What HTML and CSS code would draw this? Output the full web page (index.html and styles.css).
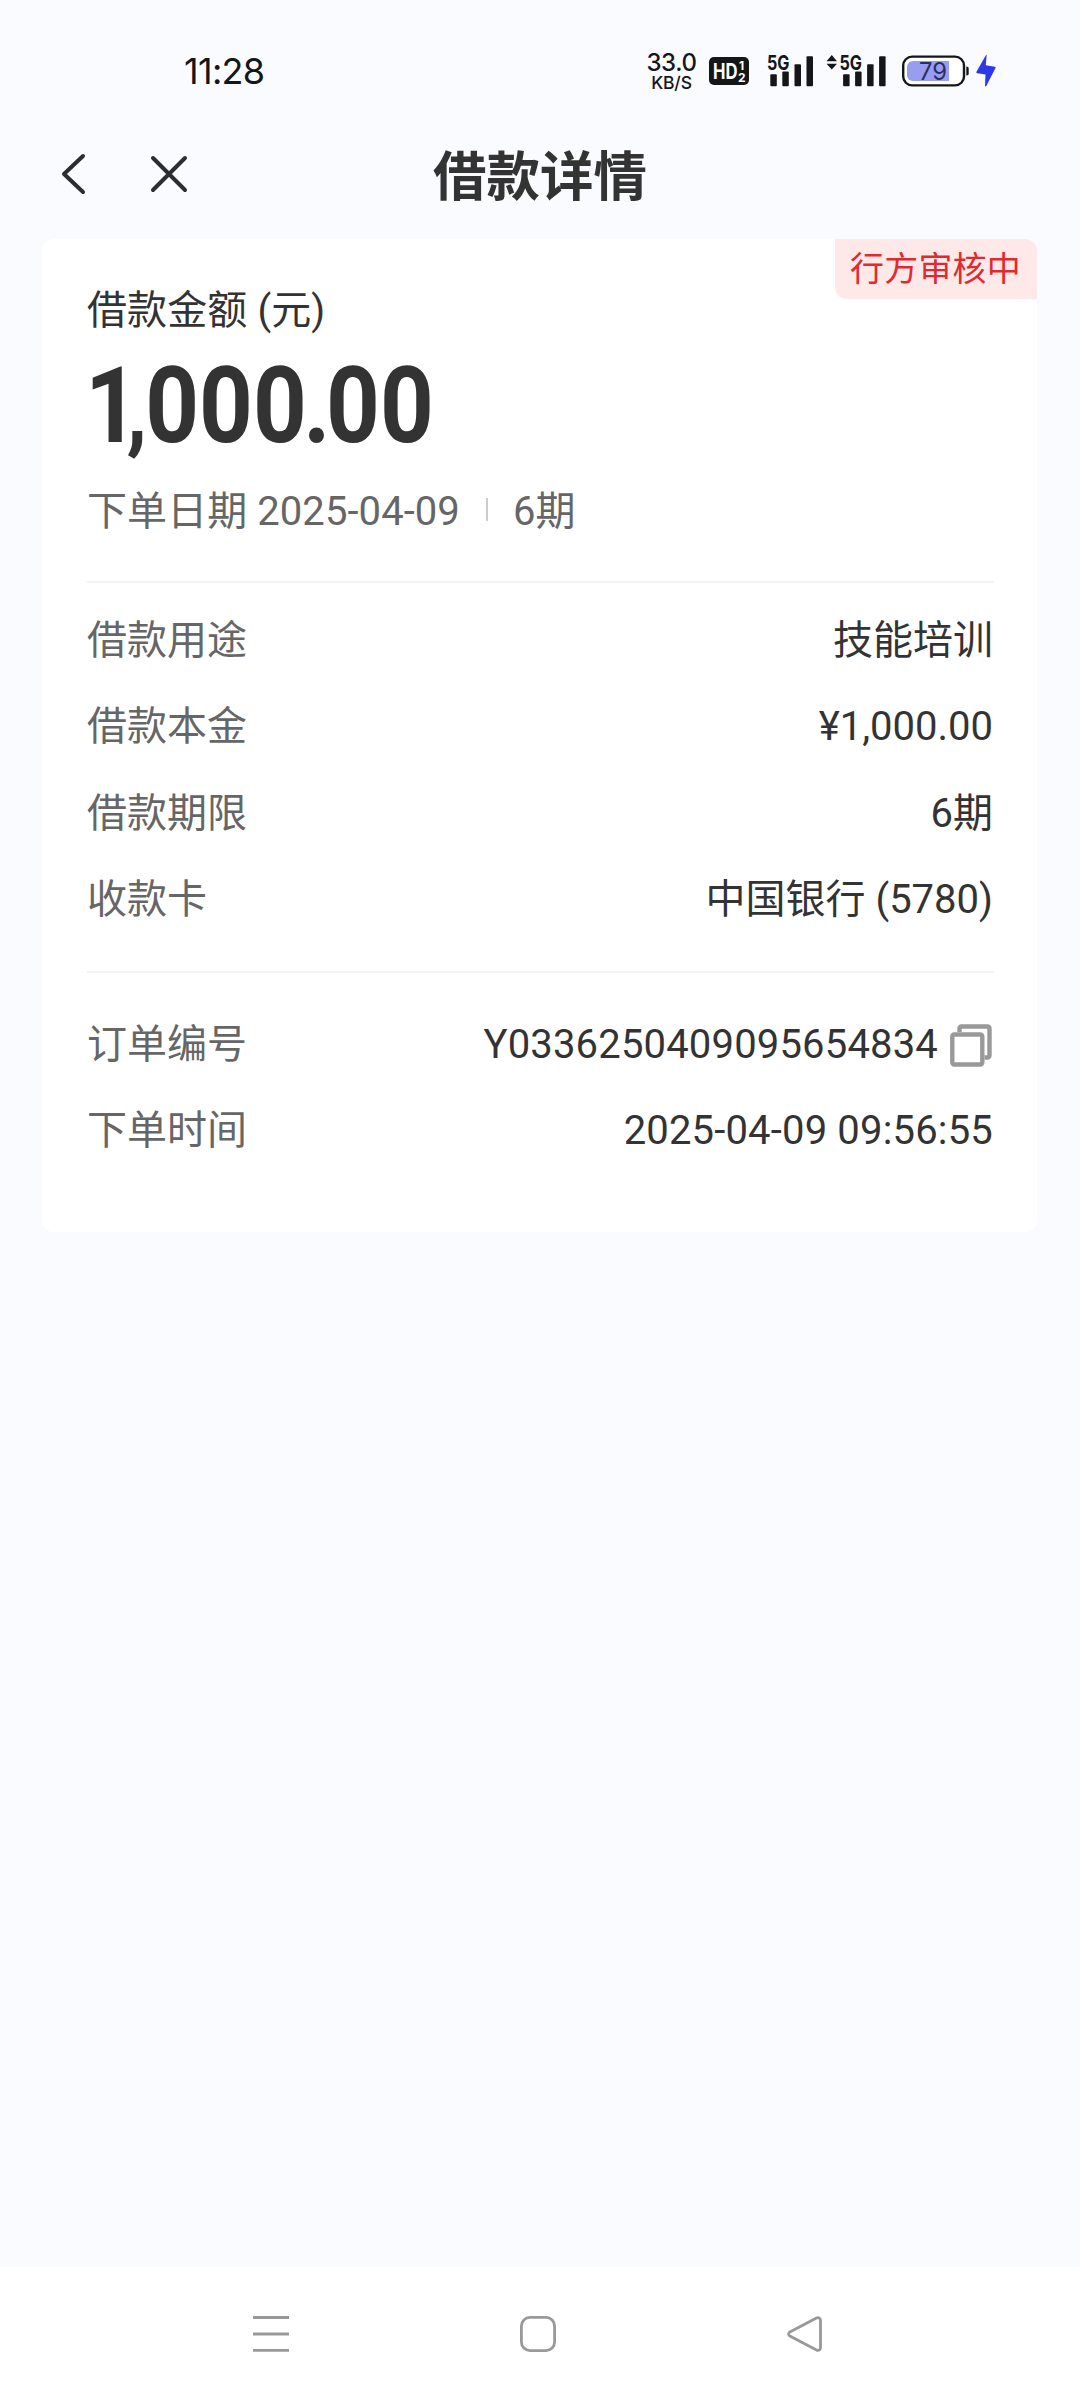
FILE: index.html
```html
<!DOCTYPE html>
<html lang="zh-CN">
<head>
<meta charset="utf-8">
<title>借款详情</title>
<link rel="stylesheet" href="styles.css">
</head>
<body>
<div class="screen">
  <div class="status">
    <span class="clock">11:28</span>
    <div class="status-icons">
      <div class="speed"><span class="speed-value">33.0</span><span class="speed-unit">KB/S</span></div>
      <svg class="hd" width="40" height="28" viewBox="0 0 40 28">
        <rect width="40" height="28" rx="5" fill="#151617"/>
        <g fill="#fff" font-family="Inter, sans-serif" font-weight="700">
          <text x="4" y="22" font-size="21" textLength="24.5" lengthAdjust="spacingAndGlyphs">HD</text>
          <text x="30" y="13" font-size="12">1</text>
          <text x="29" y="25" font-size="12">2</text>
        </g>
      </svg>
      <svg class="signal" width="47" height="32" viewBox="0 0 47 32" fill="#151617">
        <text x="0" y="14.8" font-family="Inter, sans-serif" font-weight="700" font-size="20.5" textLength="22.5" lengthAdjust="spacingAndGlyphs">5G</text>
        <rect x="3.3" y="19.3" width="6.5" height="12" rx="1"/><rect x="15.3" y="16.5" width="6.5" height="14.8" rx="1"/>
        <rect x="27.5" y="9.3" width="6.5" height="22" rx="1"/><rect x="39.5" y="1.3" width="6.5" height="30" rx="1"/>
      </svg>
      <svg class="signal-two" width="60" height="32" viewBox="0 0 60 32" fill="#151617">
        <path d="M.5 6.2 5.8 0l5.2 6.2zM.5 8.8H11L5.8 14.6z"/>
        <text x="13.5" y="14.8" font-family="Inter, sans-serif" font-weight="700" font-size="20.5" textLength="22.5" lengthAdjust="spacingAndGlyphs">5G</text>
        <rect x="17.1" y="19.3" width="6.5" height="12" rx="1"/><rect x="29.1" y="16.5" width="6.5" height="14.8" rx="1"/>
        <rect x="41.1" y="9.3" width="6.5" height="22" rx="1"/><rect x="53.1" y="1.3" width="6.5" height="30" rx="1"/>
      </svg>
      <svg class="battery" width="68" height="32" viewBox="0 0 68 32">
        <rect x="1.2" y="1.6" width="60.8" height="28.8" rx="9" fill="#fff" stroke="#151617" stroke-width="2.4"/>
        <path d="M11 6h36v20H11a6 6 0 0 1-6-6v-8a6 6 0 0 1 6-6z" fill="#979ef2"/>
        <path d="M64.3 11.5c2 0 2.4 1 2.4 2v5c0 1-.4 2-2.4 2z" fill="#151617"/>
        <text x="17" y="24.7" fill="#2b2f5e" font-family="Inter, sans-serif" font-size="24" textLength="28" lengthAdjust="spacingAndGlyphs">79</text>
      </svg>
      <svg class="bolt" width="20" height="32" viewBox="0 0 20 32"><path d="M10 0 .6 16.4c-.5.9-.2 1.7.8 1.9l8.1 1.1-.5 11.1c0 1.1.8 1.2 1.4.2L19.4 13.2c.4-.8.2-1.3-.6-1.5L9.8 10.2 10.6.5C10.6-.2 10.3-.4 10 0z" fill="#2e38e8"/></svg>
    </div>
  </div>

  <header class="header">
    <svg class="back" width="25" height="42" viewBox="0 0 25 42"><path d="M22 3 3 21l19 18"/></svg>
    <svg class="close" width="38" height="38" viewBox="0 0 38 38"><path d="m3 3 32 32M35 3 3 35"/></svg>
    <h1 class="title">借款详情</h1>
  </header>

  <main class="card">
    <div class="badge">行方审核中</div>
    <section class="summary">
      <div class="label-main">借款金额 (元)</div>
      <div class="amount"><span class="one">1</span><span class="comma">,</span>000<span class="dot">.</span>00</div>
      <div class="meta"><span>下单日期 2025-04-09</span><i class="bar"></i><span>6期</span></div>
    </section>
    <dl class="rows loan">
      <div class="row"><dt>借款用途</dt><dd>技能培训</dd></div>
      <div class="row"><dt>借款本金</dt><dd>¥1,000.00</dd></div>
      <div class="row"><dt>借款期限</dt><dd>6期</dd></div>
      <div class="row"><dt>收款卡</dt><dd>中国银行 (5780)</dd></div>
    </dl>
    <dl class="rows order">
      <div class="row"><dt>订单编号</dt><dd class="number">Y0336250409095654834
        <svg class="copy" width="42" height="43" viewBox="0 0 42 43"><path d="M9.5 8V4.5a2 2 0 0 1 2-2h26a2 2 0 0 1 2 2v27a2 2 0 0 1-2 2h-3"/><rect x="2.3" y="10.5" width="30" height="30" rx="2"/></svg></dd></div>
      <div class="row"><dt>下单时间</dt><dd class="number">2025-04-09 09:56:55</dd></div>
    </dl>
  </main>

  <nav class="navbar">
    <svg width="36" height="38" viewBox="0 0 36 38"><path d="M0 2.5h36M0 19h36M0 35.3h36"/></svg>
    <svg width="36" height="38" viewBox="0 0 36 38"><rect x="1.4" y="2.4" width="33.2" height="33.2" rx="8.5"/></svg>
    <svg width="36" height="38" viewBox="0 0 36 38"><path d="M2.8 17 29.5 3c2-1 4 0 4 2.2v27.6c0 2.2-2 3.2-4 2.2L2.8 21c-1.6-1-1.6-3 0-4z"/></svg>
  </nav>
</div>
</body>
</html>
```
FILE: styles.css
```css
* { box-sizing: border-box; margin: 0; padding: 0; }
body { background: #fafbff; font-family: Roboto, "Noto Sans CJK SC", sans-serif; color: #333; }
svg { display: block; flex: none; overflow: visible; }
.screen { width: 1080px; height: 2400px; display: flex; flex-direction: column; }

.status { height: 130px; padding: 12px 84px 0 184px; display: flex; align-items: center; justify-content: space-between; color: #151617; font-family: Inter, sans-serif; }
.clock { font-size: 36px; line-height: 44px; font-weight: 400; letter-spacing: -.7px; }
.status-icons { display: flex; align-items: center; height: 36px; }
.speed { width: 49px; margin-right: 13px; display: flex; flex-direction: column; align-items: center; white-space: nowrap; }
.speed-value { font-size: 24px; line-height: 22px; font-weight: 500; letter-spacing: -.4px; }
.speed-unit { font-size: 17.5px; line-height: 17px; font-weight: 500; letter-spacing: -.2px; }
.hd { margin-right: 18px; }
.signal { margin-right: 12px; }
.signal-two { margin-right: 16px; }
.battery { margin-right: 6px; }

.header { height: 109px; padding: 0 0 20px 61px; display: flex; align-items: center; }
.back, .close { margin-bottom: 2px; fill: none; stroke: #2c2d2f; stroke-width: 4; stroke-linecap: round; stroke-linejoin: round; }
.close { margin-left: 64px; }
.title { margin-left: 245px; padding-top: 6px; font-size: 53.5px; line-height: 80px; font-weight: 700; }

.card { position: relative; width: 995px; height: 993px; margin-left: 42px; padding: 0 43px 0 45px; background: #fff; border-radius: 12px; }
.badge { position: absolute; top: 0; right: 0; width: 202px; height: 60px; padding-left: 15px; font-size: 34px; line-height: 60px; letter-spacing: .2px; color: #e02a30; background: #ffe8e8; border-radius: 0 12px 0 12px; }
.summary { height: 344px; padding-top: 42px; border-bottom: 2px solid #f2f2f3; }
.label-main { font-size: 40px; line-height: 60px; letter-spacing: .1px; }
.amount { height: 131px; margin-left: -2px; font-size: 105.5px; line-height: 131px; font-weight: 700; transform: scaleX(.89); transform-origin: left; white-space: nowrap; }
.one { margin-right: -14px; }
.comma { margin-right: -2px; font-size: 94px; line-height: 1; }
.dot { margin: 0 -5px 0 -4px; }
.meta { height: 72px; display: flex; align-items: center; font-size: 40px; letter-spacing: .07px; color: #666; }
.bar { width: 2px; height: 23px; margin: 3px 25px 0 26px; background: #ccc; }

.rows { display: flex; flex-direction: column; font-size: 40px; line-height: 60px; }
.row { height: 86.3px; display: flex; align-items: center; justify-content: space-between; }
.loan { height: 390px; padding-top: 15px; border-bottom: 2px solid #f2f2f3; }
.order { padding-top: 29px; }
dt { color: #666; }
dd { display: flex; align-items: center; padding-right: 1px; }
.number { letter-spacing: .17px; }
.copy { margin: 0 1px 0 12px; fill: none; stroke: #999; stroke-width: 4.4; }

.navbar { height: 133px; margin-top: auto; padding: 0 257px 0 253px; display: flex; align-items: center; justify-content: space-between; background: #fff; fill: none; stroke: #999; stroke-width: 2.8; }
```
